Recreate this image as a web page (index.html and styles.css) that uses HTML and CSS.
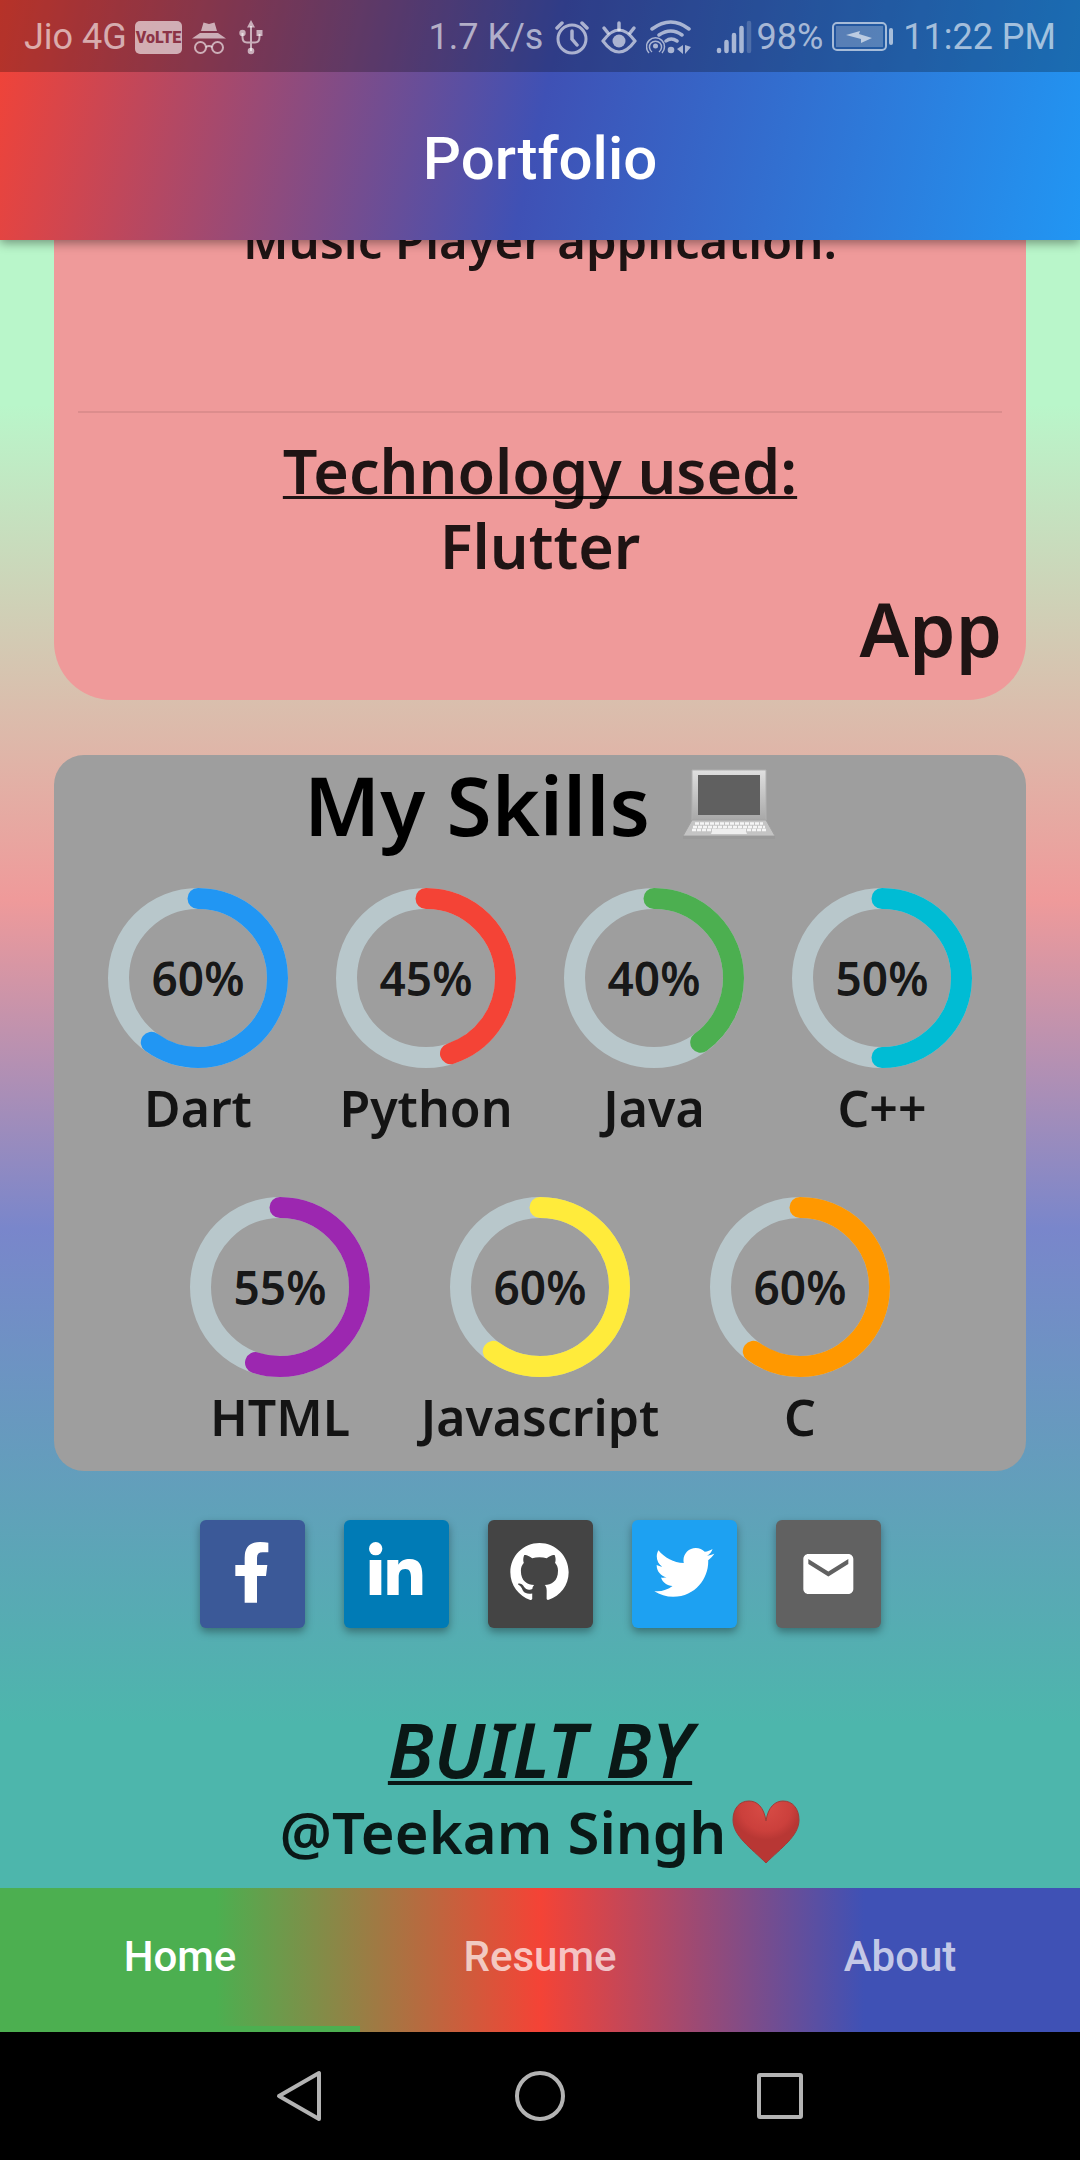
FILE: index.html
```html
<!DOCTYPE html>
<html lang="en">
<head>
<meta charset="utf-8">
<meta name="viewport" content="width=device-width, initial-scale=1">
<title>Portfolio</title>
<link rel="stylesheet" href="styles.css">
</head>
<body>
<div class="app">
  <header class="top">
    <div class="status">
      <div class="status-group">
        <span>Jio 4G</span>
        <span class="volte">VoLTE</span>
        <svg class="gap-s" width="36" height="36" viewBox="0 0 36 36" fill="currentColor"><path d="M10 12 12.500 3.500 18 5 23.500 3.500 26 12ZM1 19.500 9 14H27L35 19.500Z"/><g fill="none" stroke="currentColor" stroke-width="2"><circle cx="9.500" cy="28.500" r="5.500"/><circle cx="26.500" cy="28.500" r="5.500"/><path d="M15 28Q18 26 21 28"/></g></svg>
        <svg class="gap-m" width="24" height="36" viewBox="0 0 24 36" fill="currentColor"><path d="M12 1 16 8.500H8Z"/><circle cx="12" cy="32" r="3.300"/><circle cx="3.500" cy="14" r="3.200"/><path d="M17.500 11H23.500V17H17.500Z"/><path d="M12 7V32M3.500 14V18Q3.500 23.500 8 23.500H16Q20.500 23.500 20.500 18V15" fill="none" stroke="currentColor" stroke-width="2"/></svg>
      </div>
      <div class="status-group">
        <span>1.7 K/s</span>
        <svg class="gap-m" width="34" height="36" viewBox="0 0 34 36" fill="none" stroke="currentColor" stroke-width="3"><circle cx="17" cy="20" r="14"/><path d="M17 12V20L22 26M2 9 7 4M32 9 27 4" stroke-width="3.500" stroke-linecap="round"/></svg>
        <svg class="gap-m" width="36" height="36" viewBox="0 0 36 36"><path d="M2 22Q18 0 34 22Q18 44 2 22Z" fill="none" stroke="currentColor" stroke-width="3"/><circle cx="18" cy="22" r="6.500" fill="currentColor"/><path d="M18 4V11M3 9 7 14M33 9 29 14" stroke="currentColor" stroke-width="3.500" stroke-linecap="round"/></svg>
        <svg class="gap-s" width="46" height="36" viewBox="0 0 46 36" fill="none" stroke="currentColor"><path d="M6 10Q25-4 43 10M13 16Q25 8 36 16M20 22Q25 18 31 22" stroke-width="3.500" stroke-linecap="round"/><circle cx="25" cy="31" r="3.300" fill="currentColor" stroke="none"/><circle cx="9.500" cy="27" r="2.500" fill="currentColor" stroke="none"/><path d="M6 33A6 6 0 1 1 13 33M3 34A9 9 0 1 1 16 34" stroke-width="1.500"/><path d="M37 26V35L31 30ZM39 26V35L45 28Z" fill="currentColor" stroke="none"/></svg>
        <svg class="gap-l" width="36" height="36" viewBox="0 0 36 36" stroke="currentColor" stroke-width="4.500" stroke-linecap="round"><path d="M3 31V32M10.500 23V32M18 16V32M25.500 9V32"/><path d="M33 4V32" opacity=".3"/></svg>
        <span class="gap-xs">98%</span>
        <svg class="gap-s" width="62" height="36" viewBox="0 0 62 36"><rect x="1" y="4" width="53" height="27" rx="4" fill="none" stroke="currentColor" stroke-width="2"/><rect x="4" y="7" width="47" height="21" fill="currentColor" opacity=".4"/><path d="M14 16 28 12 27 15 40 19 29 24 29 20Z" fill="currentColor"/><rect x="57" y="9" width="4" height="17" rx="2" fill="currentColor"/></svg>
        <span class="gap-s">11:22 PM</span>
      </div>
    </div>
    <div class="appbar"><h1>Portfolio</h1></div>
  </header>

  <main class="content">
    <section class="project">
      <p class="project-about">Music Player application.</p>
      <hr>
      <h2 class="project-tech">Technology used:</h2>
      <p class="project-stack">Flutter</p>
      <p class="project-kind">App</p>
    </section>

    <section class="skills">
      <h2 class="skills-title">My Skills
        <svg class="laptop" width="94" height="72" viewBox="0 0 94 72" role="img" aria-label="laptop"><defs><linearGradient id="lid" x2="0" y2="1"><stop stop-color="#e0e0e0"/><stop offset="1" stop-color="#a8a8a8"/></linearGradient></defs><path d="M10 2H84V52H10Z" fill="url(#lid)" stroke="#b0b0b0"/><path d="M16 7H78V47H16Z" fill="#606060"/><path d="M10 52H84L93 68H1Z" fill="#c4c4c4" stroke="#a0a0a0"/><path d="M1 68H93V71H1Z" fill="#999"/><path d="M13 55.500H81M11 59H83M10 62H84" stroke="#f5f5f5" stroke-width="2.500" stroke-dasharray="4 1"/><path d="M31 61H63L65 66H29Z" fill="#eee"/></svg>
      </h2>
      <ul class="skill-row">
        <li class="skill dart"><div class="dial"><svg viewBox="0 0 180 180"><circle class="track" cx="90" cy="90" r="79.500"/><circle class="arc" cx="90" cy="90" r="79.500" pathLength="100" stroke-dasharray="60 100"/></svg><span>60%</span></div><p>Dart</p></li>
        <li class="skill python"><div class="dial"><svg viewBox="0 0 180 180"><circle class="track" cx="90" cy="90" r="79.500"/><circle class="arc" cx="90" cy="90" r="79.500" pathLength="100" stroke-dasharray="45 100"/></svg><span>45%</span></div><p>Python</p></li>
        <li class="skill java"><div class="dial"><svg viewBox="0 0 180 180"><circle class="track" cx="90" cy="90" r="79.500"/><circle class="arc" cx="90" cy="90" r="79.500" pathLength="100" stroke-dasharray="40 100"/></svg><span>40%</span></div><p>Java</p></li>
        <li class="skill cpp"><div class="dial"><svg viewBox="0 0 180 180"><circle class="track" cx="90" cy="90" r="79.500"/><circle class="arc" cx="90" cy="90" r="79.500" pathLength="100" stroke-dasharray="50 100"/></svg><span>50%</span></div><p>C++</p></li>
      </ul>
      <ul class="skill-row wide">
        <li class="skill html"><div class="dial"><svg viewBox="0 0 180 180"><circle class="track" cx="90" cy="90" r="79.500"/><circle class="arc" cx="90" cy="90" r="79.500" pathLength="100" stroke-dasharray="55 100"/></svg><span>55%</span></div><p>HTML</p></li>
        <li class="skill js"><div class="dial"><svg viewBox="0 0 180 180"><circle class="track" cx="90" cy="90" r="79.500"/><circle class="arc" cx="90" cy="90" r="79.500" pathLength="100" stroke-dasharray="60 100"/></svg><span>60%</span></div><p>Javascript</p></li>
        <li class="skill c"><div class="dial"><svg viewBox="0 0 180 180"><circle class="track" cx="90" cy="90" r="79.500"/><circle class="arc" cx="90" cy="90" r="79.500" pathLength="100" stroke-dasharray="60 100"/></svg><span>60%</span></div><p>C</p></li>
      </ul>
    </section>

    <nav class="social" aria-label="Social links">
      <a class="tile facebook" href="#facebook" aria-label="Facebook"><svg viewBox="0 0 315 324"><path d="M134 248V168H106V135H134V113Q134 66 180 66Q195 66 205 68V97H188Q171 97 171 113V135H202L198 168H171V248Z"/></svg></a>
      <a class="tile linkedin" href="#linkedin" aria-label="LinkedIn"><svg viewBox="0 0 315 324"><circle cx="95" cy="86" r="20"/><path d="M77 120H112V225H77ZM130 120H163V134C171 122 182 117 197 117C226 117 235 136 235 166V225H201V172C201 157 197 147 184 147C169 147 164 157 164 172V225H130Z"/></svg></a>
      <a class="tile github" href="#github" aria-label="GitHub"><svg viewBox="0 0 315 324"><path transform="translate(67 67) scale(7.290)" d="M12 .297c-6.630 0-12 5.373-12 12 0 5.303 3.438 9.800 8.205 11.385.6.113.82-.258.82-.577 0-.285-.01-1.040-.015-2.040-3.338.724-4.042-1.610-4.042-1.610C4.422 18.070 3.633 17.700 3.633 17.700c-1.087-.744.084-.729.084-.729 1.205.084 1.838 1.236 1.838 1.236 1.070 1.835 2.809 1.305 3.495.998.108-.776.417-1.305.76-1.605-2.665-.3-5.466-1.332-5.466-5.930 0-1.310.465-2.380 1.235-3.220-.135-.303-.54-1.523.105-3.176 0 0 1.005-.322 3.300 1.230.96-.267 1.980-.399 3-.405 1.020.006 2.040.138 3 .405 2.280-1.552 3.285-1.230 3.285-1.230.645 1.653.24 2.873.12 3.176.765.840 1.230 1.910 1.230 3.220 0 4.610-2.805 5.625-5.475 5.920.42.360.81 1.096.81 2.220 0 1.606-.015 2.896-.015 3.286 0 .315.21.690.825.570C20.565 22.092 24 17.592 24 12.297c0-6.627-5.373-12-12-12"/></svg></a>
      <a class="tile twitter" href="#twitter" aria-label="Twitter"><svg viewBox="0 0 315 324"><path transform="translate(67 67) scale(7.500)" d="M23.954 4.569c-.885.389-1.830.654-2.825.775 1.014-.611 1.794-1.574 2.163-2.723-.951.555-2.005.959-3.127 1.184-.896-.959-2.173-1.559-3.591-1.559-2.717 0-4.920 2.203-4.920 4.917 0 .39.045.765.127 1.124C7.691 8.094 4.066 6.130 1.640 3.161c-.427.722-.666 1.561-.666 2.475 0 1.710.87 3.213 2.188 4.096-.807-.026-1.566-.248-2.228-.616v.061c0 2.385 1.693 4.374 3.946 4.827-.413.111-.849.171-1.296.171-.314 0-.615-.03-.916-.086.631 1.953 2.445 3.377 4.604 3.417-1.680 1.319-3.809 2.105-6.102 2.105-.39 0-.779-.023-1.170-.067 2.189 1.394 4.768 2.209 7.557 2.209 9.054 0 13.999-7.496 13.999-13.986 0-.209 0-.42-.015-.63.961-.689 1.800-1.560 2.460-2.548z"/></svg></a>
      <a class="tile mail" href="#mail" aria-label="Email"><svg viewBox="0 0 315 324"><path transform="translate(67 72) scale(7.500)" d="M20 4H4c-1.100 0-2 .9-2 2v12c0 1.100.9 2 2 2h16c1.100 0 2-.9 2-2V6c0-1.100-.9-2-2-2zm0 4l-8 5-8-5V6l8 5 8-5v2z"/></svg></a>
    </nav>

    <footer class="credit">
      <p class="credit-title">BUILT BY</p>
      <p class="credit-name">@Teekam Singh<svg class="heart" width="68" height="64" viewBox="0 0 68 64" role="img" aria-label="heart"><defs><radialGradient id="love" cx=".5" cy=".1" r=".7"><stop stop-color="#d84c46"/><stop offset=".55" stop-color="#cb403c"/><stop offset=".75" stop-color="#b83734"/></radialGradient></defs><path d="M34 21C32 7 25 1 17 1C7 1 1 9 1 20C1 36 19 48 34 63C49 48 67 36 67 20C67 9 61 1 51 1C43 1 36 7 34 21Z" fill="url(#love)" stroke="#a03c38"/></svg></p>
    </footer>
  </main>

  <nav class="tabs" aria-label="Sections">
    <a class="tab active" href="#home" aria-current="page">Home</a>
    <a class="tab" href="#resume">Resume</a>
    <a class="tab" href="#about">About</a>
  </nav>

  <div class="sysnav">
    <button type="button" aria-label="Back"><svg width="54" height="54" viewBox="0 0 54 54"><path d="M46 4V50L6 27Z"/></svg></button>
    <button type="button" aria-label="Home screen"><svg width="54" height="54" viewBox="0 0 54 54"><circle cx="27" cy="27" r="23"/></svg></button>
    <button type="button" aria-label="Recent apps"><svg width="54" height="54" viewBox="0 0 54 54"><rect x="6" y="6" width="42" height="42" rx="1"/></svg></button>
  </div>
</div>
</body>
</html>
```
FILE: styles.css
```css
* {
  box-sizing: border-box;
}

body,
h1,
h2,
p,
ul {
  margin: 0;
  padding: 0;
}

body {
  background: #000;
}

svg {
  display: block;
}

a {
  color: inherit;
  text-decoration: none;
}

.app {
  display: flex;
  flex-direction: column;
  height: 100vh;
  font-family: "Noto Sans", "Open Sans", sans-serif;
  font-weight: 600;
  color: rgba(0, 0, 0, 0.87);
}

/* Status and title bar */

.top {
  position: relative;
  flex: none;
  background: linear-gradient(102.5deg, #f44336, #3f51b5, #2196f3);
  box-shadow: 0 3px 10px rgba(0, 0, 0, 0.4);
  font-family: Roboto, sans-serif;
  color: #fff;
}

.status {
  display: flex;
  justify-content: space-between;
  height: 72px;
  padding: 2px 24px 0;
  background: rgba(0, 0, 0, 0.25);
  font-size: 36px;
  font-weight: 400;
  line-height: 44px;
  color: rgba(255, 255, 255, 0.6);
}

.status-group {
  display: flex;
  align-items: center;
  white-space: nowrap;
}

.volte {
  margin-left: 8px;
  padding: 0 1px;
  border-radius: 5px;
  background: rgba(255, 255, 255, 0.6);
  font-size: 16px;
  font-weight: 900;
  line-height: 33px;
  color: #8c3446;
}

.gap-xs {
  margin-left: 4px;
}

.gap-s {
  margin-left: 9px;
}

.gap-m {
  margin-left: 12px;
}

.gap-l {
  margin-left: 24px;
}

.appbar {
  display: flex;
  align-items: center;
  justify-content: center;
  height: 168px;
  padding-top: 6px;
}

.appbar h1 {
  font-size: 60px;
  font-weight: 500;
  line-height: 72px;
}

/* Scrolled page, resting at its end */

.content {
  display: flex;
  flex: 1;
  flex-direction: column;
  justify-content: flex-end;
  min-height: 0;
  padding: 0 54px 20px;
  overflow: hidden;
  background: linear-gradient(#b9f6ca 10%, #ef9a9a 40%, #7986cb 60%, #4db6ac 90%);
}

.project {
  flex: none;
  padding: 60px 24px 25px;
  border-radius: 58px;
  background: #ef9a9a;
  text-align: center;
}

.project-about {
  padding-bottom: 141px;
  font-size: 49px;
  line-height: 60px;
}

.project hr {
  height: 2px;
  margin: 0 0 20px;
  border: 0;
  background: rgba(0, 0, 0, 0.08);
}

.project-tech,
.project-stack {
  font-size: 61px;
  font-weight: 600;
  line-height: 75px;
}

.project-tech {
  text-decoration: underline 3px;
  text-decoration-skip-ink: none;
  text-underline-offset: 2px;
}

.project-kind {
  font-size: 74px;
  line-height: 92px;
  text-align: right;
}

/* Skills */

.skills {
  flex: none;
  margin-top: 55px;
  padding-bottom: 24px;
  border-radius: 30px;
  background: #9e9e9e;
}

.skills-title {
  display: flex;
  align-items: center;
  justify-content: center;
  gap: 32px;
  font-size: 82px;
  font-weight: 600;
  line-height: 98px;
  color: #000;
}

.skill-row {
  display: flex;
  justify-content: center;
  gap: 48px;
  margin-top: 35px;
  list-style: none;
}

.skill-row.wide {
  gap: 80px;
  margin-top: 59px;
}

.skill {
  display: flex;
  flex-direction: column;
  align-items: center;
  gap: 10px;
  width: 180px;
  font-size: 50px;
  line-height: 60px;
}

.dial {
  display: grid;
  place-items: center;
  width: 180px;
  height: 180px;
  font-size: 46px;
}

.dial svg,
.dial span {
  grid-area: 1 / 1;
}

.dial svg {
  width: 100%;
  height: 100%;
  transform: rotate(-90deg);
}

.track,
.arc {
  fill: none;
  stroke-width: 21px;
}

.track {
  stroke: #b8c7cb;
}

.arc {
  stroke: currentColor;
  stroke-linecap: round;
}

.dart svg { color: #2196f3; }
.python svg { color: #f44336; }
.java svg { color: #4caf50; }
.cpp svg { color: #00bcd4; }
.html svg { color: #9c27b0; }
.js svg { color: #ffeb3b; }
.c svg { color: #ff9800; }

/* Social links */

.social {
  display: flex;
  flex: none;
  justify-content: center;
  gap: 39px;
  margin-top: 49px;
}

.tile {
  width: 105px;
  height: 108px;
  border-radius: 6px;
  box-shadow: 0 4px 8px rgba(0, 0, 0, 0.35);
}

.tile svg {
  width: 100%;
  height: 100%;
  fill: #fff;
}

.facebook { background: #3b5998; }
.linkedin { background: #007bb6; }
.github { background: #444; }
.twitter { background: #1da1f2; }
.mail { background: #616161; }

/* Credit */

.credit {
  flex: none;
  margin-top: 74px;
  text-align: center;
}

.credit-title {
  font-size: 75px;
  font-style: italic;
  line-height: 94px;
  text-decoration: underline 4px;
  text-decoration-skip-ink: none;
  text-underline-offset: 3px;
}

.credit-name {
  display: flex;
  align-items: center;
  justify-content: center;
  gap: 6px;
  font-size: 58px;
  line-height: 72px;
}

/* Tabs */

.tabs {
  display: grid;
  flex: none;
  grid-template-columns: repeat(3, 1fr);
  height: 144px;
  background: linear-gradient(90deg, #4caf50 20%, #f44336 50%, #3f51b5 80%);
  font-family: Roboto, sans-serif;
  font-size: 42px;
  font-weight: 500;
  line-height: 138px;
  text-align: center;
  color: rgba(255, 255, 255, 0.7);
}

.tab {
  border-bottom: 6px solid transparent;
}

.tab.active {
  border-color: #4caf50;
  color: #fff;
}

/* System buttons */

.sysnav {
  display: flex;
  flex: none;
  align-items: center;
  justify-content: center;
  gap: 186px;
  height: 128px;
  background: #000;
}

.sysnav button {
  padding: 0;
  border: 0;
  background: none;
}

.sysnav svg {
  fill: none;
  stroke: #b3b3b3;
  stroke-width: 4px;
  stroke-linejoin: round;
}
```
